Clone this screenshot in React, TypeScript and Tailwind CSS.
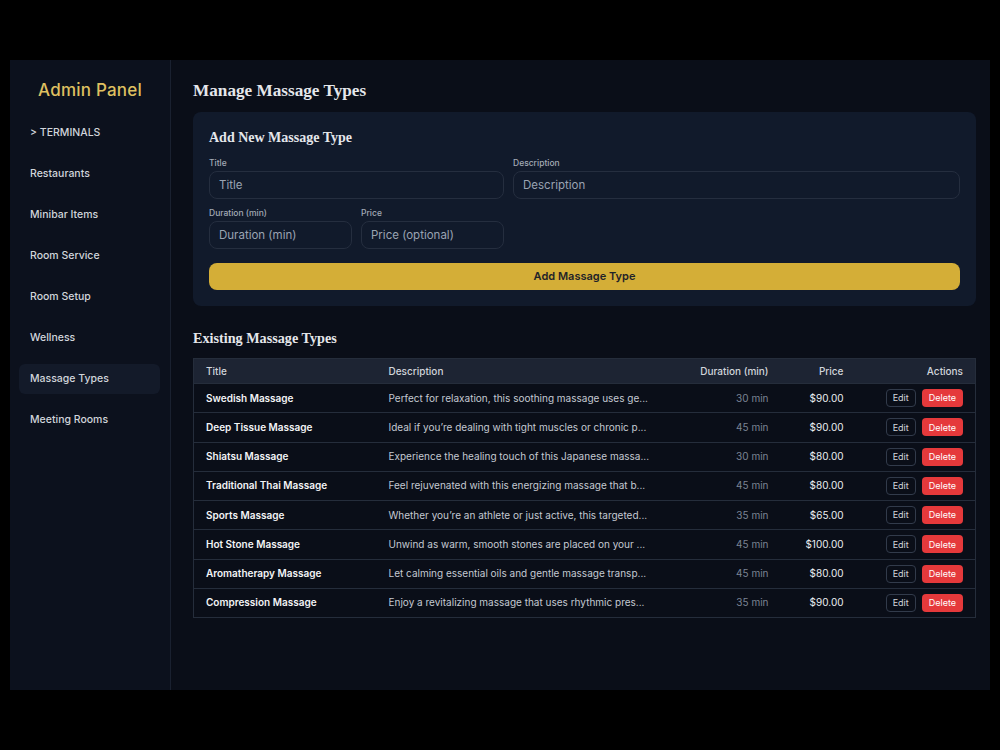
import { useState } from 'react'

interface MassageType {
  title: string
  description: string
  duration: number
  price: string
}

const navItems = [
  '> TERMINALS',
  'Restaurants',
  'Minibar Items',
  'Room Service',
  'Room Setup',
  'Wellness',
  'Massage Types',
  'Meeting Rooms',
]

const massageTypes: MassageType[] = [
  { title: 'Swedish Massage', description: 'Perfect for relaxation, this soothing massage uses ge...', duration: 30, price: '$90.00' },
  { title: 'Deep Tissue Massage', description: 'Ideal if you’re dealing with tight muscles or chronic p...', duration: 45, price: '$90.00' },
  { title: 'Shiatsu Massage', description: 'Experience the healing touch of this Japanese massa...', duration: 30, price: '$80.00' },
  { title: 'Traditional Thai Massage', description: 'Feel rejuvenated with this energizing massage that b...', duration: 45, price: '$80.00' },
  { title: 'Sports Massage', description: 'Whether you’re an athlete or just active, this targeted...', duration: 35, price: '$65.00' },
  { title: 'Hot Stone Massage', description: 'Unwind as warm, smooth stones are placed on your ...', duration: 45, price: '$100.00' },
  { title: 'Aromatherapy Massage', description: 'Let calming essential oils and gentle massage transp...', duration: 45, price: '$80.00' },
  { title: 'Compression Massage', description: 'Enjoy a revitalizing massage that uses rhythmic pres...', duration: 35, price: '$90.00' },
]

const sans = "font-['Inter','Noto_Sans',sans-serif]"
const serif = "font-['Liberation_Serif','DejaVu_Serif',serif]"

export default function App() {
  const [active, setActive] = useState('Massage Types')

  return (
    <div className={`min-h-screen bg-black px-[10px] py-[60px] ${sans}`}>
      <div className="flex h-[630px] bg-[#0a0e18]">
        {/* Sidebar */}
        <aside className="w-[161px] flex-shrink-0 bg-[#0c111d] border-r border-[#1a2130] px-[9px] pt-[19px]">
          <h1 className="text-center text-[17px] leading-[22px] font-medium text-[#dfc060] tracking-[0.2px]">
            Admin Panel
          </h1>
          <nav className="mt-[17px] flex flex-col gap-[11px]">
            {navItems.map((item) => (
              <button
                key={item}
                onClick={() => setActive(item)}
                className={`h-[30px] w-[141px] rounded-md px-[11px] text-left text-[10.5px] font-medium text-[#d1d5db] ${
                  active === item ? 'bg-[#131a29]' : ''
                }`}
              >
                {item}
              </button>
            ))}
          </nav>
        </aside>

        {/* Main */}
        <main className="flex-1 pl-[22px] pr-[14px] pt-[19px]">
          <h2 className={`${serif} text-[17.2px] leading-[24px] font-bold text-[#e5e7eb]`}>
            Manage Massage Types
          </h2>

          <section className="mt-[9px] rounded-lg bg-[#111a2b] px-4 pt-4 pb-4">
            <h3 className={`${serif} text-[14px] leading-[20px] font-bold text-[#e5e7eb]`}>
              Add New Massage Type
            </h3>
            <div className="mt-[9px] grid grid-cols-[143px_143px_1fr] gap-x-[9px] gap-y-[8px]">
              <Field label="Title" placeholder="Title" className="col-span-2" />
              <Field label="Description" placeholder="Description" />
              <Field label="Duration (min)" placeholder="Duration (min)" />
              <Field label="Price" placeholder="Price (optional)" />
            </div>
            <button className="mt-[14px] h-[27px] w-full rounded-lg bg-[#d4ae37] text-[11px] font-semibold text-[#1f2329]">
              Add Massage Type
            </button>
          </section>

          <h3 className={`${serif} mt-[22px] text-[14.2px] leading-[20px] font-bold text-[#e5e7eb]`}>
            Existing Massage Types
          </h3>

          <table className="mt-[10px] w-full table-fixed border-collapse border border-[#252d3b] text-[10px]">
            <colgroup>
              <col className="w-[183px]" />
              <col className="w-[284px]" />
              <col className="w-[120px]" />
              <col className="w-[75px]" />
              <col />
            </colgroup>
            <thead>
              <tr className="h-[25px] bg-[#1d2433] text-[#d1d5db]">
                <th className="px-3 text-left font-medium">Title</th>
                <th className="px-3 text-left font-medium">Description</th>
                <th className="px-3 text-right font-medium">Duration (min)</th>
                <th className="px-3 text-right font-medium">Price</th>
                <th className="px-3 text-right font-medium">Actions</th>
              </tr>
            </thead>
            <tbody>
              {massageTypes.map((m) => (
                <tr key={m.title} className="h-[29.25px] border-t border-[#252d3b]">
                  <td className="px-3 font-semibold text-[#f3f4f6]">{m.title}</td>
                  <td className="px-3 whitespace-nowrap overflow-hidden text-[#c4c9d2]">{m.description}</td>
                  <td className="px-3 text-right text-[#7b8494]">{m.duration} min</td>
                  <td className="px-3 text-right text-[#eceef2]">{m.price}</td>
                  <td className="px-3">
                    <div className="flex items-center justify-end gap-[6px]">
                      <button className="h-[18px] rounded border border-[#323b4b] px-[6px] text-[9px] text-[#d1d5db]">
                        Edit
                      </button>
                      <button className="h-[18px] rounded bg-[#e5393b] px-[7px] text-[9px] text-white">
                        Delete
                      </button>
                    </div>
                  </td>
                </tr>
              ))}
            </tbody>
          </table>
        </main>
      </div>
    </div>
  )
}

function Field({ label, placeholder, className = '' }: { label: string; placeholder: string; className?: string }) {
  return (
    <label className={`flex flex-col ${className}`}>
      <span className="text-[8.5px] leading-[12px] font-medium text-[#a3aab6]">{label}</span>
      <input
        placeholder={placeholder}
        className="mt-[2px] h-[28px] rounded-lg border border-[#252e3f] bg-[#111a2b] px-[9px] text-[11.5px] text-[#e5e7eb] placeholder:text-[#9aa3b2] outline-none"
      />
    </label>
  )
}
